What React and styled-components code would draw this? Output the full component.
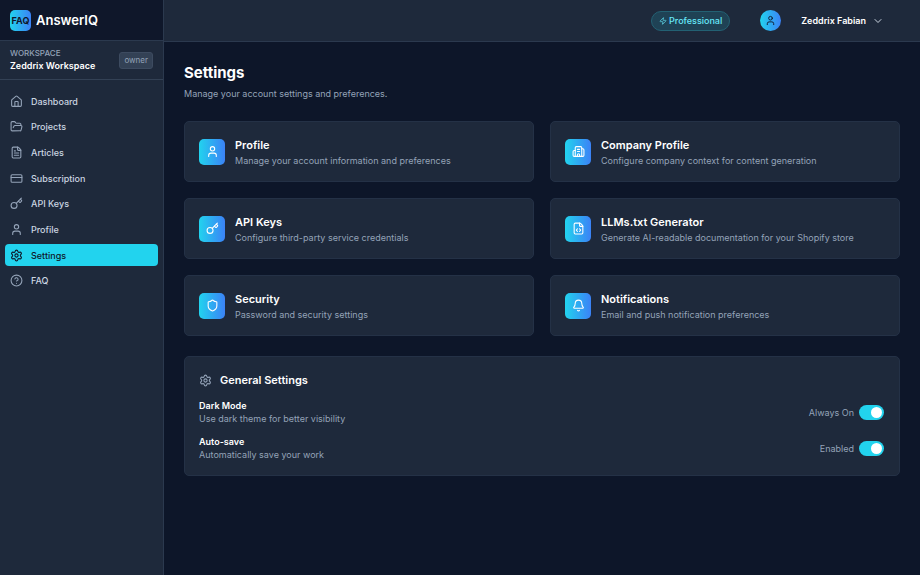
import React from 'react';
import styled, { createGlobalStyle, css } from 'styled-components';
import {
  House, FolderOpen, FileText, CreditCard, Key, User, Settings,
  CircleQuestionMark, Zap, ChevronDown, Building2, FileCode, Shield, Bell,
} from 'lucide-react';

const GlobalStyle = createGlobalStyle`
  *, *::before, *::after { box-sizing: border-box; }
  body {
    margin: 0;
    background: #0d1629;
    color: #ffffff;
    font-family: Inter, "Liberation Sans", sans-serif;
    font-size: 9px;
    line-height: 13px;
  }
  h1, h2, p { margin: 0; }
  button { font: inherit; color: inherit; border: 0; background: none; cursor: pointer; }
  svg { flex: none; display: block; }
`;

const gradient = 'linear-gradient(90deg, #22d3ee, #3b82f6)';

const Shell = styled.div`
  display: grid;
  grid-template-columns: 164px minmax(0, 1fr);
  min-height: 100vh;
`;

const Sidebar = styled.aside`
  display: flex;
  flex-direction: column;
  background: #1e293b;
  border-right: 1px solid #2b394e;
`;

const Brand = styled.div`
  display: flex;
  align-items: center;
  gap: 5px;
  height: 41px;
  padding: 0 10px;
  background: #0f172a;
  border-bottom: 1px solid #2b394e;
`;

const Logo = styled.span`
  display: grid;
  place-items: center;
  width: 21px;
  height: 21px;
  border-radius: 5px;
  background: ${gradient};
  color: #0f172a;
  font-size: 9px;
  font-weight: 700;
`;

const BrandName = styled.span`
  font-size: 13px;
  line-height: 18px;
  font-weight: 600;
`;

const Workspace = styled.div`
  display: flex;
  align-items: center;
  justify-content: space-between;
  height: 39px;
  padding: 0 10px;
  border-bottom: 1px solid #334155;
`;

const WorkspaceLabel = styled.div`
  color: #94a3b8;
  font-size: 8px;
  line-height: 11px;
  font-weight: 500;
`;

const WorkspaceName = styled.div`
  font-weight: 600;
`;

const RoleTag = styled.span`
  padding: 1px 4px;
  border: 1px solid #3d4b60;
  border-radius: 3px;
  background: #334155;
  color: #94a3b8;
  font-size: 8px;
`;

const Nav = styled.nav`
  display: grid;
  grid-auto-rows: 1fr;
  row-gap: 3px;
  height: 202px;
  margin: 10px 5px;
`;

const NavLink = styled.a`
  display: flex;
  align-items: center;
  gap: 8px;
  padding: 0 5px;
  border-radius: 4px;
  color: #cbd5e1;
  font-weight: 500;
  text-decoration: none;
  svg { color: #94a3b8; }
  ${({ $active }) => $active && css`
    background: #22d3ee;
    color: #0f172a;
    svg { color: #0f172a; }
  `}
`;

const Column = styled.div`
  display: flex;
  flex-direction: column;
  min-width: 0;
`;

const TopBar = styled.header`
  display: flex;
  align-items: center;
  justify-content: flex-end;
  height: 42px;
  padding-right: 36px;
  background: #1e293b;
  border-bottom: 1px solid #2b394e;
`;

const PlanBadge = styled.span`
  display: flex;
  align-items: center;
  gap: 2px;
  height: 20px;
  padding: 0 7px;
  margin-right: 30px;
  border: 1px solid #236173;
  border-radius: 10px;
  background: #1f4255;
  color: #67e8f9;
  font-weight: 500;
`;

const Account = styled.button`
  display: flex;
  align-items: center;
  padding: 0;
  font-weight: 600;
`;

const Avatar = styled.span`
  display: grid;
  place-items: center;
  width: 21px;
  height: 21px;
  margin-right: 20px;
  border-radius: 50%;
  background: ${gradient};
  color: #0f172a;
`;

const AccountName = styled.span`
  margin-right: 6px;
`;

const Main = styled.main`
  padding: 20px;
`;

const PageTitle = styled.h1`
  font-size: 15px;
  line-height: 22px;
  font-weight: 700;
`;

const Lead = styled.p`
  margin-top: 3px;
  color: #94a3b8;
`;

const CardGrid = styled.div`
  display: grid;
  grid-template-columns: repeat(2, minmax(0, 1fr));
  gap: 16px;
  margin: 21px 0 20px;
`;

const panel = css`
  border: 1px solid #243146;
  border-radius: 5px;
  background: #1e293b;
`;

const Card = styled.a`
  ${panel}
  display: flex;
  align-items: center;
  gap: 10px;
  min-height: 61px;
  padding: 0 14px;
  color: inherit;
  text-decoration: none;
`;

const CardIcon = styled.span`
  display: grid;
  place-items: center;
  width: 26px;
  height: 26px;
  border-radius: 5px;
  background: ${gradient};
`;

const Heading = styled.h2`
  font-size: 11px;
  line-height: 18px;
  font-weight: 600;
`;

const Muted = styled.p`
  color: #94a3b8;
`;

const Panel = styled.section`
  ${panel}
  padding: 14px 15px 14px 14px;
`;

const PanelHead = styled.div`
  display: flex;
  align-items: center;
  gap: 8px;
  margin-bottom: 10px;
  color: #94a3b8;
  ${Heading} { color: #ffffff; }
`;

const SettingRow = styled.div`
  display: flex;
  align-items: center;
  justify-content: space-between;
  & + & { margin-top: 10px; }
`;

const SettingName = styled.div`
  font-weight: 600;
`;

const ToggleLabel = styled.label`
  display: flex;
  align-items: center;
  gap: 5px;
  color: #94a3b8;
`;

const Switch = styled.input`
  appearance: none;
  display: flex;
  align-items: center;
  width: 25px;
  height: 15px;
  margin: 0;
  padding: 0 2px;
  border-radius: 8px;
  background: #475569;
  cursor: pointer;
  &::before {
    content: "";
    width: 11px;
    height: 11px;
    border-radius: 50%;
    background: #ffffff;
  }
  &:checked {
    justify-content: flex-end;
    background: #22d3ee;
  }
`;

const navItems = [
  ['Dashboard', House],
  ['Projects', FolderOpen],
  ['Articles', FileText],
  ['Subscription', CreditCard],
  ['API Keys', Key],
  ['Profile', User],
  ['Settings', Settings],
  ['FAQ', CircleQuestionMark],
];

const cards = [
  ['Profile', 'Manage your account information and preferences', User],
  ['Company Profile', 'Configure company context for content generation', Building2],
  ['API Keys', 'Configure third-party service credentials', Key],
  ['LLMs.txt Generator', 'Generate AI-readable documentation for your Shopify store', FileCode],
  ['Security', 'Password and security settings', Shield],
  ['Notifications', 'Email and push notification preferences', Bell],
];

const toggles = [
  ['Dark Mode', 'Use dark theme for better visibility', 'Always On'],
  ['Auto-save', 'Automatically save your work', 'Enabled'],
];

export default function App() {
  return (
    <>
      <GlobalStyle />
      <Shell>
        <Sidebar>
          <Brand>
            <Logo>FAQ</Logo>
            <BrandName>AnswerIQ</BrandName>
          </Brand>
          <Workspace>
            <div>
              <WorkspaceLabel>WORKSPACE</WorkspaceLabel>
              <WorkspaceName>Zeddrix Workspace</WorkspaceName>
            </div>
            <RoleTag>owner</RoleTag>
          </Workspace>
          <Nav>
            {navItems.map(([label, Icon]) => (
              <NavLink
                key={label}
                href="#"
                $active={label === 'Settings'}
                aria-current={label === 'Settings' ? 'page' : undefined}
              >
                <Icon size={13} />
                {label}
              </NavLink>
            ))}
          </Nav>
        </Sidebar>
        <Column>
          <TopBar>
            <PlanBadge>
              <Zap size={8} />
              Professional
            </PlanBadge>
            <Account type="button">
              <Avatar><User size={11} /></Avatar>
              <AccountName>Zeddrix Fabian</AccountName>
              <ChevronDown size={12} color="#cbd5e1" />
            </Account>
          </TopBar>
          <Main>
            <PageTitle>Settings</PageTitle>
            <Lead>Manage your account settings and preferences.</Lead>
            <CardGrid>
              {cards.map(([title, text, Icon]) => (
                <Card key={title} href="#">
                  <CardIcon><Icon size={13} /></CardIcon>
                  <div>
                    <Heading>{title}</Heading>
                    <Muted>{text}</Muted>
                  </div>
                </Card>
              ))}
            </CardGrid>
            <Panel>
              <PanelHead>
                <Settings size={13} />
                <Heading>General Settings</Heading>
              </PanelHead>
              {toggles.map(([name, text, state]) => (
                <SettingRow key={name}>
                  <div>
                    <SettingName>{name}</SettingName>
                    <Muted>{text}</Muted>
                  </div>
                  <ToggleLabel>
                    {state}
                    <Switch type="checkbox" role="switch" aria-label={name} defaultChecked />
                  </ToggleLabel>
                </SettingRow>
              ))}
            </Panel>
          </Main>
        </Column>
      </Shell>
    </>
  );
}
